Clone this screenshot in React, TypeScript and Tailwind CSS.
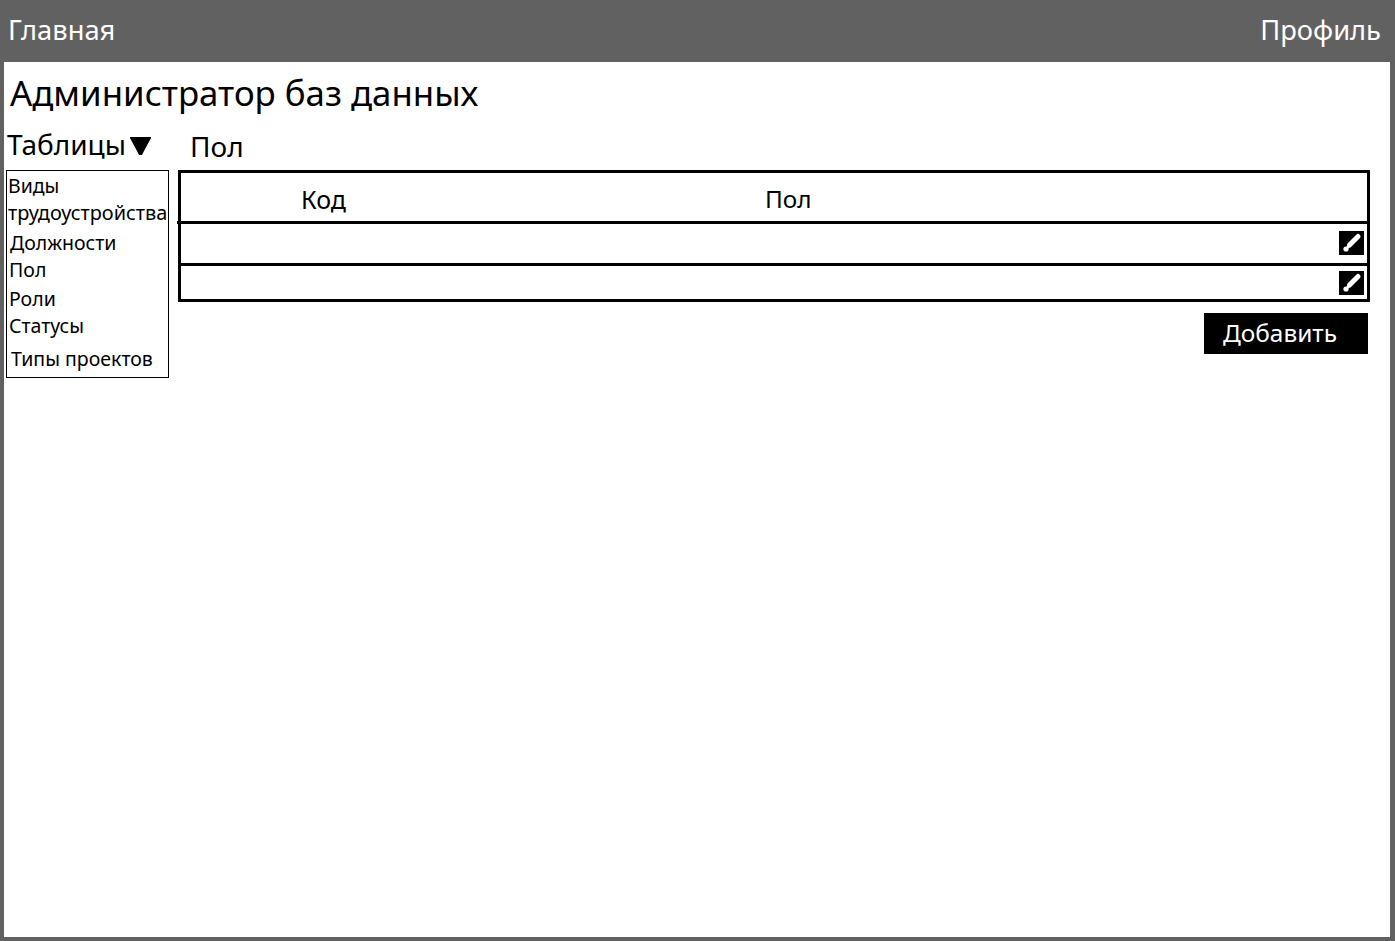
const font = { fontFamily: '"Noto Sans", sans-serif' };

function EditButton() {
  return (
    <div className="w-[25px] h-[24px] bg-black flex items-center justify-center">
      <svg width="25" height="24" viewBox="0 0 25 24">
        <path d="M19 5.5 L10.5 14" stroke="#fff" strokeWidth="5" strokeLinecap="round" />
        <circle cx="7" cy="18" r="2.6" fill="#fff" />
        <path d="M11 14 L7.5 17.5" stroke="#fff" strokeWidth="2.5" />
      </svg>
    </div>
  );
}

const items = [
  { t: "Виды", c: "ml-[1px] h-[27px]" },
  { t: "трудоустройства", c: "ml-[1px] h-[30px] text-[19.9px]" },
  { t: "Должности", c: "ml-[3px] h-[27px]" },
  { t: "Пол", c: "ml-[2px] h-[29px]" },
  { t: "Роли", c: "ml-[2px] h-[27px]" },
  { t: "Статусы", c: "ml-[2px] h-[33px]" },
  { t: "Типы проектов", c: "ml-[4px] h-[27px]" },
];

export default function App() {
  return (
    <div className="w-[1395px] h-[941px] bg-[#616161] flex flex-col overflow-hidden" style={font}>
      <header className="h-[62px] shrink-0 flex items-center justify-between pl-[8px] pr-[14px] pb-[3px] text-white text-[27.3px] leading-none">
        <span>Главная</span>
        <span>Профиль</span>
      </header>
      <main className="flex-1 ml-[4px] mr-[5px] mb-[4px] bg-white text-black flex flex-col">
        <h1 className="h-[68px] pl-[6px] pt-[7px] text-[34.8px] font-normal leading-[48px] whitespace-nowrap">Администратор баз данных</h1>
        <div className="flex items-start">
          <aside className="ml-[2px] w-[163px] shrink-0">
            <div className="h-[40px] flex items-start gap-[4px] text-[28px] leading-[28px] pl-[1px]">
              <span>Таблицы</span>
              <svg width="21" height="18" viewBox="0 0 21 18" className="mt-[7px]">
                <path d="M0 0 H21 V1 L14 14 L12 18 H9 L7 14 L0 1 Z" fill="#000" />
              </svg>
            </div>
            <ul className="border border-black h-[208px] pt-[1px] text-[19.5px] leading-[27px] whitespace-nowrap">
              {items.map((i) => (
                <li key={i.t} className={i.c}>{i.t}</li>
              ))}
            </ul>
          </aside>
          <section className="ml-[9px] w-[1192px]">
            <div className="h-[40px] pl-[12px] text-[28px] leading-[32px]">Пол</div>
            <div className="border-[3px] border-black">
              <div className="h-[48px] flex pt-[8px] text-[25px] leading-[36px]">
                <span className="ml-[120px] w-[464px]">Код</span>
                <span className="text-[24.3px]">Пол</span>
              </div>
              <div className="relative h-[42px] border-t-[3px] border-black flex items-center justify-end pr-[3px] pb-[1px]">
                <div className="absolute -top-[3px] -left-[4px] w-[1px] h-[3px] bg-black"></div>
                <EditButton />
              </div>
              <div className="h-[36px] border-t-[3px] border-black flex items-center justify-end pr-[3px]">
                <EditButton />
              </div>
            </div>
            <div className="flex justify-end mt-[11px] pr-[2px]">
              <button className="w-[164px] h-[41px] bg-black text-white text-[24.4px] leading-none text-left pl-[19px]">Добавить</button>
            </div>
          </section>
        </div>
      </main>
    </div>
  );
}
